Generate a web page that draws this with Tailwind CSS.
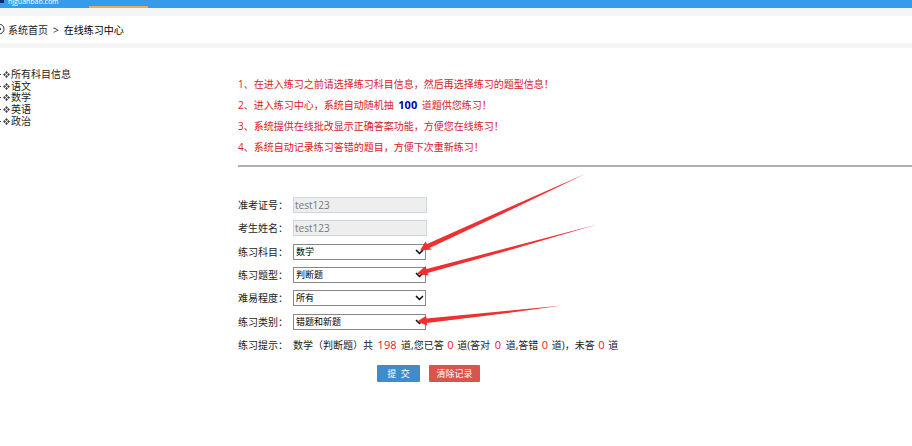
<!DOCTYPE html>
<html lang="zh-CN">
<head>
    <meta charset="UTF-8">
    <meta name="viewport" content="width=device-width, initial-scale=1.0">
    <title>在线练习中心</title>
    <script src="https://cdn.jsdelivr.net/npm/@tailwindcss/browser@4"></script>
</head>
<body class="relative min-h-screen overflow-x-hidden bg-white font-['Open_Sans','Noto_Sans_CJK_SC',sans-serif] text-[10px] leading-3 text-[#222]">
    <header class="flex h-2 items-end overflow-hidden bg-[#379bec] text-white">
        <div class="flex w-[89px] items-end gap-1">
            <span class="mb-[5px] h-[3px] w-1 bg-[#0b2b6b]"></span>
            <a href="#" class="text-[7px] leading-3">njguanbao.com</a>
        </div>
        <div class="h-[2px] w-[59px] bg-[#e8b04c]"></div>
    </header>

    <nav class="box-content flex h-[27px] items-center border-t-8 border-[#f4f5f7]">
        <svg class="-ml-[7px] h-3 w-3" viewBox="0 0 12 12" fill="none" stroke="#333">
            <circle cx="6" cy="5" r="5"/>
            <circle cx="6" cy="5" r="1.500" fill="#333"/>
        </svg>
        <a href="#" class="ml-[3px]">系统首页</a>
        <span class="mx-[5px]">&gt;</span>
        <a href="#" class="text-black">在线练习中心</a>
    </nav>

    <div class="flex border-t-[5px] border-[#f5f5f5]">
        <aside class="w-[238px] shrink-0 pt-[21px]">
            <ul class="grid h-[58px] auto-rows-fr leading-[11px]">
                <li class="flex items-center">
                    <svg class="mr-px h-[7px] w-[10px]" viewBox="0 0 10 7" fill="#444"><path d="M0 3h1v1H0zM6.500 0L8 1.500L6.500 3L5 1.500zM6.500 4L8 5.500L6.500 7L5 5.500zM4.500 2L6 3.500L4.500 5L3 3.500zM8.500 2L10 3.500L8.500 5L7 3.500z"/></svg>
                    <a href="#">所有科目信息</a>
                </li>
                <li class="flex items-center">
                    <svg class="mr-px h-[7px] w-[10px]" viewBox="0 0 10 7" fill="#444"><path d="M0 3h1v1H0zM6.500 0L8 1.500L6.500 3L5 1.500zM6.500 4L8 5.500L6.500 7L5 5.500zM4.500 2L6 3.500L4.500 5L3 3.500zM8.500 2L10 3.500L8.500 5L7 3.500z"/></svg>
                    <a href="#">语文</a>
                </li>
                <li class="flex items-center">
                    <svg class="mr-px h-[7px] w-[10px]" viewBox="0 0 10 7" fill="#444"><path d="M0 3h1v1H0zM6.500 0L8 1.500L6.500 3L5 1.500zM6.500 4L8 5.500L6.500 7L5 5.500zM4.500 2L6 3.500L4.500 5L3 3.500zM8.500 2L10 3.500L8.500 5L7 3.500z"/></svg>
                    <a href="#">数学</a>
                </li>
                <li class="flex items-center">
                    <svg class="mr-px h-[7px] w-[10px]" viewBox="0 0 10 7" fill="#444"><path d="M0 3h1v1H0zM6.500 0L8 1.500L6.500 3L5 1.500zM6.500 4L8 5.500L6.500 7L5 5.500zM4.500 2L6 3.500L4.500 5L3 3.500zM8.500 2L10 3.500L8.500 5L7 3.500z"/></svg>
                    <a href="#">英语</a>
                </li>
                <li class="flex items-center">
                    <svg class="mr-px h-[7px] w-[10px]" viewBox="0 0 10 7" fill="#444"><path d="M0 3h1v1H0zM6.500 0L8 1.500L6.500 3L5 1.500zM6.500 4L8 5.500L6.500 7L5 5.500zM4.500 2L6 3.500L4.500 5L3 3.500zM8.500 2L10 3.500L8.500 5L7 3.500z"/></svg>
                    <a href="#">政治</a>
                </li>
            </ul>
        </aside>

        <main class="min-w-0 grow pt-[26px]">
            <div class="leading-[21px] text-[#d8201f]">
                <p>1、在进入练习之前请选择练习科目信息，然后再选择练习的题型信息！</p>
                <p>2、进入练习中心，系统自动随机抽 <b class="mx-[2px] text-[11px] leading-none text-[#0000b0]">100</b> 道题供您练习！</p>
                <p>3、系统提供在线批改显示正确答案功能，方便您在线练习！</p>
                <p>4、系统自动记录练习答错的题目，方便下次重新练习！</p>
            </div>
            <hr class="mt-[7px] border-t-2 border-[#b0b0b0]">

            <form class="pt-[26px]">
                <div class="grid h-[164px] auto-rows-fr grid-cols-[55px_1fr] items-center">
                    <label for="examNo">准考证号：</label>
                    <input id="examNo" value="test123" disabled class="h-4 w-[134px] border border-[#ccd6e2] bg-[#eee] px-px text-[#777]">

                    <label for="examName">考生姓名：</label>
                    <input id="examName" value="test123" disabled class="h-4 w-[134px] border border-[#ccd6e2] bg-[#eee] px-px text-[#777]">

                    <label for="subject">练习科目：</label>
                    <div class="relative w-[133px]">
                        <select id="subject" class="block h-4 w-full appearance-none border border-[#888] bg-white px-[2px] text-[9px] leading-3 text-black"><option>数学</option></select>
                        <svg class="pointer-events-none absolute top-[5px] right-[2px] h-[6px] w-[9px]" viewBox="0 0 9 6" fill="none" stroke="#000" stroke-width="1.5"><path d="M1 1L4.500 4.500L8 1"/></svg>
                    </div>

                    <label for="kind">练习题型：</label>
                    <div class="relative w-[133px]">
                        <select id="kind" class="block h-4 w-full appearance-none border border-[#888] bg-white px-[2px] text-[9px] leading-3 text-black"><option>判断题</option></select>
                        <svg class="pointer-events-none absolute top-[5px] right-[2px] h-[6px] w-[9px]" viewBox="0 0 9 6" fill="none" stroke="#000" stroke-width="1.5"><path d="M1 1L4.500 4.500L8 1"/></svg>
                    </div>

                    <label for="level">难易程度：</label>
                    <div class="relative w-[133px]">
                        <select id="level" class="block h-4 w-full appearance-none border border-[#888] bg-white px-[2px] text-[9px] leading-3 text-black"><option>所有</option></select>
                        <svg class="pointer-events-none absolute top-[5px] right-[2px] h-[6px] w-[9px]" viewBox="0 0 9 6" fill="none" stroke="#000" stroke-width="1.5"><path d="M1 1L4.500 4.500L8 1"/></svg>
                    </div>

                    <label for="category">练习类别：</label>
                    <div class="relative w-[133px]">
                        <select id="category" class="block h-4 w-full appearance-none border border-[#888] bg-white px-[2px] text-[9px] leading-3 text-black"><option>错题和新题</option></select>
                        <svg class="pointer-events-none absolute top-[5px] right-[2px] h-[6px] w-[9px]" viewBox="0 0 9 6" fill="none" stroke="#000" stroke-width="1.5"><path d="M1 1L4.500 4.500L8 1"/></svg>
                    </div>

                    <span>练习提示：</span>
                    <p>数学（判断题）共 <span class="mx-[2px] text-[11px] leading-none text-[#d8201f]">198</span> 道,您已答 <span class="mx-px text-[11px] leading-none text-[#d8201f]">0</span> 道(答对 <span class="mx-[2px] text-[11px] leading-none text-[#d8201f]">0</span> 道,答错 <span class="mx-px text-[11px] leading-none text-[#d8201f]">0</span> 道)，未答 <span class="mx-px text-[11px] leading-none text-[#d8201f]">0</span> 道</p>
                </div>

                <div class="mt-2 flex gap-[9px] pl-[139px] text-[9px] text-white">
                    <button type="submit" class="h-[17px] w-[43px] rounded-[1px] bg-[#428bca]">提&nbsp; 交</button>
                    <button type="button" class="h-[17px] w-[51px] rounded-[1px] bg-[#d9534f]">清除记录</button>
                </div>
            </form>
        </main>
    </div>

    <!-- arrows pointing at the drop-downs -->
    <svg class="pointer-events-none absolute top-[165px] left-[400px] h-[170px] w-[210px]" viewBox="0 0 210 170" fill="#ee3033">
        <path d="M20 85.500L25.500 76.500L27 79L110 42L186 8.500L111 44.800L29.500 83L32 84.500Z"/>
        <path d="M16.500 109L25.500 101L26.500 104L110 82.300L197 59.500L110 85L27.500 108L28.500 110.500Z"/>
        <path d="M17 156.500L26 151L26.500 153.500L100 146.400L162 140.500L100 149L27 158L27 160.500Z"/>
    </svg>
</body>
</html>
